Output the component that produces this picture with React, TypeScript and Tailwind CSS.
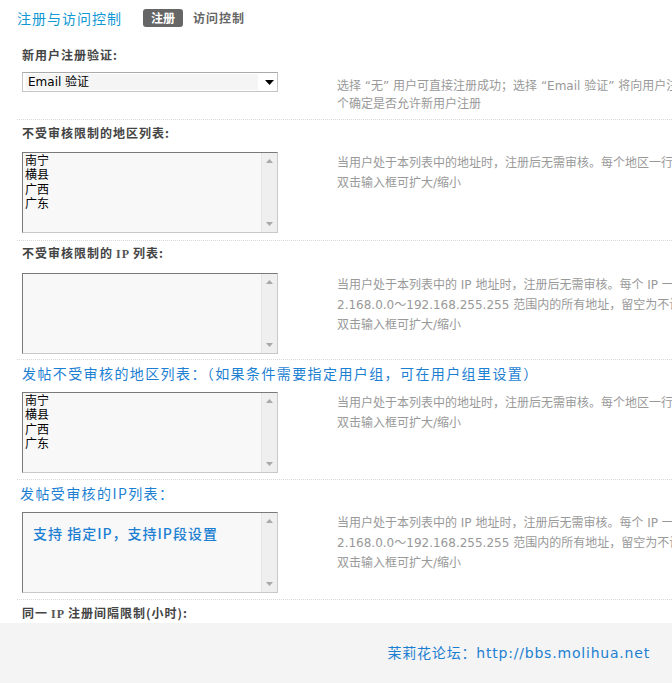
import React from "react";

const cjk = "font-['Noto_Sans_CJK_SC',sans-serif]";
const mixed = "font-['DejaVu_Sans','Noto_Sans_CJK_SC',sans-serif]";

function TextBox({ children }: { children?: React.ReactNode }) {
  return (
    <div className="flex h-[81px] w-[256px] shrink-0 border border-t-[#7a7a7a] border-l-[#7a7a7a] border-r-[#c8c8c8] border-b-[#c8c8c8] bg-[#f8f8f8]">
      <div className="flex-1 overflow-hidden px-[2px]">{children}</div>
      <div className="flex w-[16px] flex-col items-center justify-between border-l border-[#e4e4e4] bg-[#efefef] py-[6px]">
        <svg width="7" height="4" viewBox="0 0 7 4">
          <path d="M0 4 L3.5 0 L7 4 Z" fill="#a8a8a8" />
        </svg>
        <svg width="7" height="4" viewBox="0 0 7 4">
          <path d="M0 0 L3.5 4 L7 0 Z" fill="#a8a8a8" />
        </svg>
      </div>
    </div>
  );
}

function Regions() {
  return (
    <div className={`${cjk} text-[12px] leading-[14.3px] text-black`}>
      <div>南宁</div>
      <div>横县</div>
      <div>广西</div>
      <div>广东</div>
    </div>
  );
}

function Desc({ lines, leading = "leading-5" }: { lines: string[]; leading?: string }) {
  return (
    <div className={`${mixed} ${leading} text-[12px] text-[#999] whitespace-nowrap`}>
      {lines.map((l, i) => (
        <div key={i}>{l}</div>
      ))}
    </div>
  );
}

function Label({ children }: { children: React.ReactNode }) {
  return (
    <div className={`${cjk} h-5 leading-5 text-[12px] font-bold tracking-[1px] text-[#444]`}>
      {children}
    </div>
  );
}

function Heading({ children, className = "" }: { children: React.ReactNode; className?: string }) {
  return (
    <div className={`${cjk} h-5 leading-5 text-[14px] tracking-[1.4px] text-[#1d7fd2] whitespace-nowrap ${className}`}>
      {children}
    </div>
  );
}

const Serif = ({ children }: { children: React.ReactNode }) => (
  <span className="font-['Liberation_Serif',serif] text-[#555] mx-[3px]">{children}</span>
);

const regionDesc = ["当用户处于本列表中的地址时，注册后无需审核。每个地区一行，例如", "双击输入框可扩大/缩小"];
const ipDesc = [
  "当用户处于本列表中的 IP 地址时，注册后无需审核。每个 IP 一行，例如",
  "2.168.0.0～192.168.255.255 范围内的所有地址，留空为不设置",
  "双击输入框可扩大/缩小",
];

export default function App() {
  return (
    <div className="h-[683px] w-[672px] overflow-hidden bg-white">
      {/* header */}
      <div className="flex h-[36px] items-center pl-[17px]">
        <span className={`${cjk} text-[14px] tracking-[1px] text-[#0e98d4]`}>注册与访问控制</span>
        <span className={`${cjk} ml-[21px] flex h-[18px] w-[40px] items-center justify-center rounded-[3px] bg-[#666] text-[12px] font-bold text-white`}>
          注册
        </span>
        <span className={`${cjk} ml-[10px] text-[12px] font-bold tracking-[1px] text-[#666]`}>访问控制</span>
      </div>

      <div className="ml-[17px]">
        {/* section 1 */}
        <div className="h-[84px] border-b border-dotted border-[#d8d8d8] pl-[5px] pt-[9px]">
          <Label>新用户注册验证:</Label>
          <div className="mt-[7px] flex">
            <div className="flex h-[20px] w-[256px] shrink-0 items-center border border-[#c4c4c4] border-t-[#aaa] bg-white">
              <div className={`${mixed} ml-[3px] h-[16px] w-[232px] bg-[#f5f5f5] pl-[2px] text-[12px] leading-[16px] text-black`}>
                Email 验证
              </div>
              <svg className="ml-[7px]" width="9" height="5" viewBox="0 0 9 5">
                <path d="M0 0 L9 0 L4.5 5 Z" fill="#000" />
              </svg>
            </div>
            <div className="ml-[59px] mt-[6px]">
              <Desc
                leading="leading-[17.5px]"
                lines={[
                  "选择 “无” 用户可直接注册成功；选择 “Email 验证” 将向用户注册 Email 发送一封验证邮件",
                  "个确定是否允许新用户注册",
                ]}
              />
            </div>
          </div>
        </div>

        {/* section 2 */}
        <div className="h-[121px] border-b border-dotted border-[#d8d8d8] pl-[5px] pt-[3px]">
          <Label>不受审核限制的地区列表:</Label>
          <div className="mt-[9px] flex">
            <TextBox>
              <Regions />
            </TextBox>
            <div className="ml-[59px] mt-[1px]">
              <Desc lines={regionDesc} />
            </div>
          </div>
        </div>

        {/* section 3 */}
        <div className="h-[119px] border-b border-dotted border-[#d8d8d8] pl-[5px] pt-[2px]">
          <Label>
            不受审核限制的<Serif>IP</Serif>列表:
          </Label>
          <div className="mt-[10px] flex">
            <TextBox />
            <div className="ml-[59px] mt-[2px]">
              <Desc lines={ipDesc} />
            </div>
          </div>
        </div>

        {/* section 4 */}
        <div className="h-[120px] border-b border-dotted border-[#d8d8d8] pl-[5px] pt-[3px]">
          <Heading>发帖不受审核的地区列表：（如果条件需要指定用户组，可在用户组里设置）</Heading>
          <div className="mt-[9px] flex">
            <TextBox>
              <Regions />
            </TextBox>
            <div className="ml-[59px] mt-[1px]">
              <Desc lines={regionDesc} />
            </div>
          </div>
        </div>

        {/* section 5 */}
        <div className="h-[120px] border-b border-dotted border-[#d8d8d8] pl-[5px] pt-[3px]">
          <Heading className="-ml-[2px]">发帖受审核的IP列表：</Heading>
          <div className="mt-[9px] flex">
            <TextBox>
              <div className={`${cjk} ml-[8px] mt-[10px] text-[14px] font-medium leading-5 tracking-[1px] text-[#1d7fd2] whitespace-nowrap`}>
                支持 指定IP，支持IP段设置
              </div>
            </TextBox>
            <div className="ml-[59px] mt-[1px]">
              <Desc lines={ipDesc} />
            </div>
          </div>
        </div>

        {/* section 6 */}
        <div className="h-[23px] pl-[5px] pt-[3px]">
          <Label>
            同一<Serif>IP</Serif>注册间隔限制(小时):
          </Label>
        </div>
      </div>

      {/* footer */}
      <div className="flex h-[60px] items-center justify-end bg-[#f4f4f4] pr-[22px]">
        <span className={`${mixed} text-[14px] tracking-[0.8px] text-[#1d7fd2]`}>茉莉花论坛：http://bbs.molihua.net</span>
      </div>
    </div>
  );
}
